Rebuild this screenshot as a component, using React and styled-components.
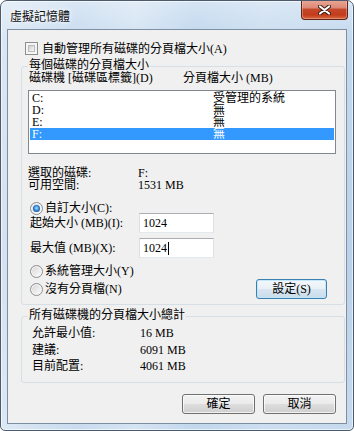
import React from 'react';
import styled, { createGlobalStyle } from 'styled-components';

const Global = createGlobalStyle`
  html, body { margin: 0; padding: 0; background: #ffffff; }
  body {
    width: 354px; height: 431px; overflow: hidden;
    font-family: "Liberation Serif", "Noto Sans CJK TC", serif;
    font-size: 12px; color: #000;
  }
  * { box-sizing: border-box; }
`;

const Window = styled.div`
  width: 354px;
  height: 431px;
  border: 1px solid #4b5a6c;
  border-radius: 7px 7px 5px 5px;
  padding: 0 6px 6px;
  display: flex;
  flex-direction: column;
  background:
    linear-gradient(90deg, rgba(255,255,255,0.45) 0%, rgba(255,255,255,0.15) 22%, rgba(255,255,255,0.35) 38%, rgba(255,255,255,0.05) 55%, rgba(255,255,255,0.2) 75%, rgba(255,255,255,0.1) 100%),
    linear-gradient(180deg, #d3e3f3 0%, #bcd4ec 40px, #b3cce6 60%, #c0d6ec 100%);
  box-shadow: inset 0 0 0 1px rgba(255,255,255,0.6);
  overflow: hidden;
`;

const TitleBar = styled.div`
  height: 28px;
  flex: none;
  display: flex;
  align-items: flex-start;
  justify-content: space-between;
`;

const Title = styled.div`
  margin: 8px 0 0 3px;
  font-family: "Noto Sans CJK TC", sans-serif;
  font-size: 12px;
  line-height: 14px;
  color: #101010;
  text-shadow: 0 0 6px rgba(255,255,255,0.9), 0 0 3px rgba(255,255,255,0.9);
`;

const CloseButton = styled.div`
  width: 47px;
  height: 20px;
  margin: -1px -1px 0 0;
  border: 1px solid #5e2418;
  border-top: none;
  border-radius: 0 0 4px 4px;
  background: linear-gradient(180deg, #eaa898 0%, #dc8a76 40%, #c5472a 50%, #c23c1c 78%, #d9673f 100%);
  box-shadow: inset 0 0 0 1px rgba(255,220,210,0.35);
  display: flex;
  align-items: center;
  justify-content: center;
`;

const Client = styled.div`
  flex: 1;
  border: 1px solid #7f8fa3;
  background: #f0f0f0;
  display: flex;
  flex-direction: column;
`;

const CheckRow = styled.div`
  margin-top: 12px;
  height: 13px;
  padding-left: 17px;
  display: flex;
  align-items: center;
  gap: 4px;
  line-height: 12px;
`;

const CheckBox = styled.span`
  width: 13px;
  height: 13px;
  flex: none;
  border: 1px solid #8e8f8f;
  background: #f5f5f5;
  padding: 2px;
  display: flex;
  &::after {
    content: '';
    flex: 1;
    border: 1px solid #bcbcbc;
    background: linear-gradient(135deg, #cdcdcd 0%, #e9e9e9 60%, #f8f8f8 100%);
  }
`;

const Group = styled.div`
  position: relative;
  margin: ${p => p.$top}px 0 0 13px;
  width: 324px;
  height: ${p => p.$height}px;
  border: 1px solid #d5dfe5;
  border-radius: 3px;
  display: flex;
  flex-direction: column;
  flex: none;
`;

const GroupTitle = styled.span`
  position: absolute;
  top: -8px;
  left: 6px;
  padding: 0 1px;
  background: #f0f0f0;
  line-height: 12px;
  white-space: nowrap;
`;

const HeaderRow = styled.div`
  margin-top: 5px;
  height: 12px;
  padding-left: 7px;
  display: flex;
  line-height: 12px;
  white-space: nowrap;
`;

const HeaderCell = styled.span`
  width: ${p => p.$w ? `${p.$w}px` : 'auto'};
  flex: none;
`;

const ListBox = styled.div`
  margin: 6px 0 0 6px;
  width: 308px;
  height: 64px;
  flex: none;
  border: 1px solid #828790;
  background: #ffffff;
  padding: 1px;
  display: flex;
  flex-direction: column;
`;

const ListRow = styled.div`
  height: 12px;
  flex: none;
  padding-left: 2px;
  display: flex;
  line-height: 12px;
  white-space: nowrap;
  background: ${p => p.$selected ? '#3399ff' : 'transparent'};
  color: ${p => p.$selected ? '#ffffff' : '#000000'};
`;

const ListCell = styled.span`
  width: ${p => p.$w ? `${p.$w}px` : 'auto'};
  flex: none;
`;

const InfoRow = styled.div`
  margin-top: ${p => p.$top || 0}px;
  height: 12px;
  padding-left: ${p => p.$pad}px;
  display: flex;
  align-items: center;
  line-height: 12px;
  white-space: nowrap;
  flex: none;
`;

const Label = styled.span`
  width: ${p => p.$w}px;
  flex: none;
`;

const RadioRow = styled.div`
  margin-top: ${p => p.$top}px;
  height: ${p => p.$height || 12}px;
  padding-left: 8px;
  padding-right: 17px;
  display: flex;
  align-items: center;
  gap: 2px;
  line-height: 12px;
  white-space: nowrap;
  flex: none;
`;

const Radio = styled.span`
  width: 13px;
  height: 13px;
  flex: none;
  border-radius: 50%;
  border: 1px solid #8b8d8f;
  background: linear-gradient(135deg, #d2d2d2 0%, #ececec 55%, #fbfbfb 100%);
  box-shadow: inset 0 0 0 1px #f6f6f6;
  display: flex;
  align-items: center;
  justify-content: center;
  &::after {
    content: '';
    display: ${p => p.$checked ? 'block' : 'none'};
    width: 7px;
    height: 7px;
    border-radius: 50%;
    background: radial-gradient(circle at 50% 45%, #b4e6ff 0%, #4a9be6 35%, #1a5aa6 70%, #0f3f7c 100%);
  }
`;

const InputRow = styled.div`
  margin-top: ${p => p.$top}px;
  height: 20px;
  padding-left: 8px;
  display: flex;
  align-items: center;
  line-height: 12px;
  white-space: nowrap;
  flex: none;
`;

const TextBox = styled.div`
  width: 75px;
  height: 20px;
  flex: none;
  background: #ffffff;
  border: 1px solid #dbdfe6;
  border-top-color: #abadb3;
  border-bottom-color: #e3e9ef;
  padding-left: 3px;
  display: flex;
  align-items: center;
  line-height: 12px;
`;

const Caret = styled.span`
  width: 1px;
  height: 13px;
  background: #000;
  margin-left: 1px;
`;

const Spacer = styled.span`
  flex: 1;
`;

const Button = styled.div`
  width: ${p => p.$w}px;
  height: 20px;
  flex: none;
  border: 1px solid ${p => p.$default ? '#3c7fb1' : '#707070'};
  border-radius: 3px;
  background: ${p => p.$default
    ? 'linear-gradient(180deg, #f3f8fb 0%, #e9f1f7 48%, #d8e6f1 52%, #cadcea 100%)'
    : 'linear-gradient(180deg, #f2f2f2 0%, #ebebeb 48%, #dddddd 52%, #cfcfcf 100%)'};
  box-shadow: inset 0 0 0 1px ${p => p.$default ? 'rgba(190,230,253,0.9)' : 'rgba(255,255,255,0.7)'};
  display: flex;
  align-items: center;
  justify-content: center;
  line-height: 12px;
  white-space: nowrap;
`;

const ButtonRow = styled.div`
  margin-top: 11px;
  height: 20px;
  padding-right: 10px;
  display: flex;
  justify-content: flex-end;
  gap: 8px;
  flex: none;
`;

const drives = [
  { d: 'C:', s: '受管理的系統' },
  { d: 'D:', s: '無' },
  { d: 'E:', s: '無' },
  { d: 'F:', s: '無', sel: true },
];

const CloseGlyph = () => (
  <svg width="13" height="10" viewBox="0 0 13 10">
    <path d="M2 1.5 L11 8.5 M11 1.5 L2 8.5" stroke="#3a1a14" strokeWidth="4" strokeLinecap="round" fill="none" />
    <path d="M2 1.5 L11 8.5 M11 1.5 L2 8.5" stroke="#ffffff" strokeWidth="2.2" strokeLinecap="round" fill="none" />
  </svg>
);

export default function App() {
  return (
    <>
      <Global />
      <Window>
        <TitleBar>
          <Title>虛擬記憶體</Title>
          <CloseButton><CloseGlyph /></CloseButton>
        </TitleBar>
        <Client>
          <CheckRow>
            <CheckBox />
            <span>自動管理所有磁碟的分頁檔大小(A)</span>
          </CheckRow>

          <Group $top={11} $height={239}>
            <GroupTitle>每個磁碟的分頁檔大小</GroupTitle>
            <HeaderRow>
              <HeaderCell $w={154}>磁碟機 [磁碟區標籤](D)</HeaderCell>
              <HeaderCell>分頁檔大小 (MB)</HeaderCell>
            </HeaderRow>
            <ListBox>
              {drives.map(r => (
                <ListRow key={r.d} $selected={r.sel}>
                  <ListCell $w={181}>{r.d}</ListCell>
                  <ListCell>{r.s}</ListCell>
                </ListRow>
              ))}
            </ListBox>
            <InfoRow $top={13} $pad={6}>
              <Label $w={110}>選取的磁碟:</Label>
              <span>F:</span>
            </InfoRow>
            <InfoRow $pad={6}>
              <Label $w={110}>可用空間:</Label>
              <span>1531 MB</span>
            </InfoRow>
            <RadioRow $top={11}>
              <Radio $checked />
              <span>自訂大小(C):</span>
            </RadioRow>
            <InputRow $top={-1}>
              <Label $w={109}>起始大小 (MB)(I):</Label>
              <TextBox>1024</TextBox>
            </InputRow>
            <InputRow $top={5}>
              <Label $w={109}>最大值 (MB)(X):</Label>
              <TextBox>1024<Caret /></TextBox>
            </InputRow>
            <RadioRow $top={7}>
              <Radio />
              <span>系統管理大小(Y)</span>
            </RadioRow>
            <RadioRow $top={2} $height={20}>
              <Radio />
              <span>沒有分頁檔(N)</span>
              <Spacer />
              <Button $w={71} $default>設定(S)</Button>
            </RadioRow>
          </Group>

          <Group $top={11} $height={67}>
            <GroupTitle>所有磁碟機的分頁檔大小總計</GroupTitle>
            <InfoRow $top={10} $pad={10}>
              <Label $w={108}>允許最小值:</Label>
              <span>16 MB</span>
            </InfoRow>
            <InfoRow $top={5} $pad={10}>
              <Label $w={108}>建議:</Label>
              <span>6091 MB</span>
            </InfoRow>
            <InfoRow $top={4} $pad={10}>
              <Label $w={108}>目前配置:</Label>
              <span>4061 MB</span>
            </InfoRow>
          </Group>

          <ButtonRow>
            <Button $w={73}>確定</Button>
            <Button $w={73}>取消</Button>
          </ButtonRow>
        </Client>
      </Window>
    </>
  );
}
